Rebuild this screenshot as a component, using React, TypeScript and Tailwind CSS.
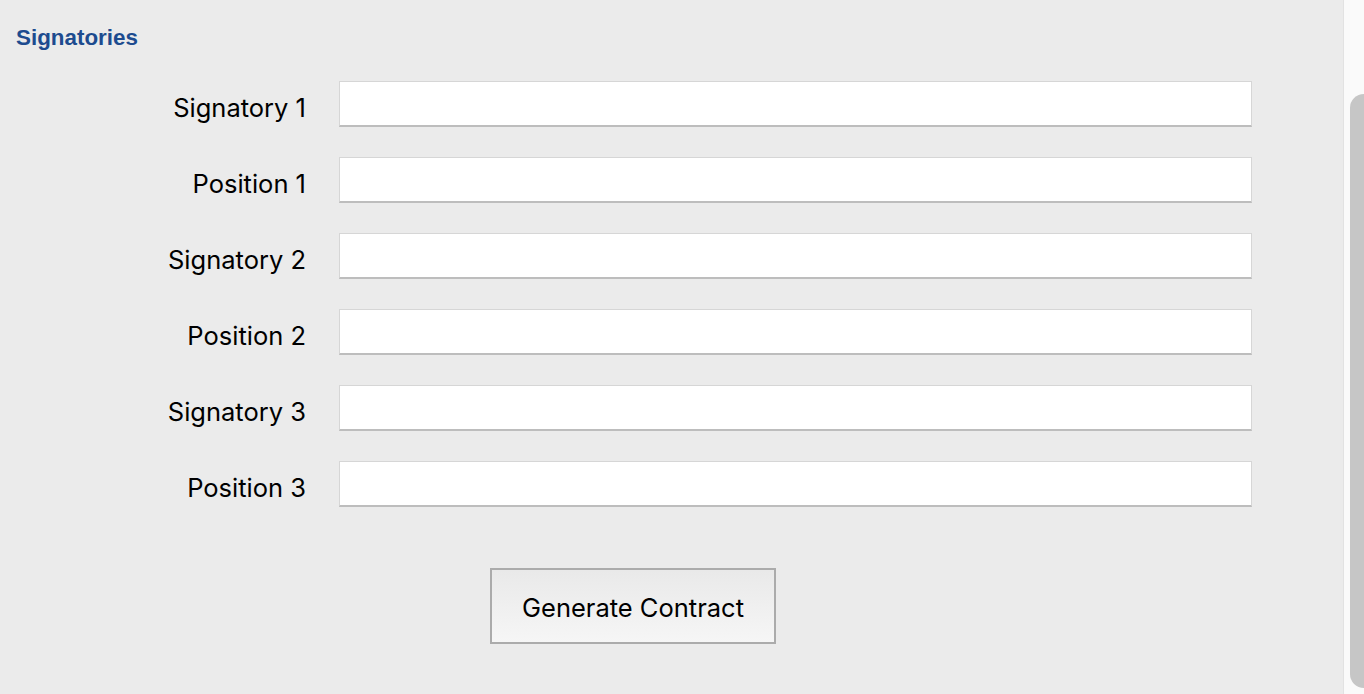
import React from "react";

const fields = [
  "Signatory 1",
  "Position 1",
  "Signatory 2",
  "Position 2",
  "Signatory 3",
  "Position 3",
];

const FieldRow = ({ label }: { label: string }) => (
  <div className="flex items-center h-[46px]">
    <label className="w-[306px] pt-[7px] text-right text-[25.5px] text-black font-['Inter','Liberation_Sans',sans-serif] leading-none">
      {label}
    </label>
    <input
      type="text"
      className="ml-[33px] w-[913px] h-[46px] bg-white border border-[#d6d6d6] border-b-2 border-b-[#bdbdbd] outline-none"
    />
  </div>
);

export default function App() {
  return (
    <div className="flex w-[1364px] h-[694px] overflow-hidden bg-[#ebebeb]">
      <div className="flex-1 flex flex-col">
        <h2 className="pl-[16px] pt-[24px] text-[22.4px] font-bold text-[#1d4b8f] leading-[28px] font-['Liberation_Sans',Arial,sans-serif]">
          Signatories
        </h2>
        <div className="mt-[29px] flex flex-col gap-[30px]">
          {fields.map((f) => (
            <FieldRow key={f} label={f} />
          ))}
        </div>
        <div className="mt-[61px] pl-[490px]">
          <button className="w-[286px] h-[76px] pt-[5px] border-2 border-[#ababab] bg-gradient-to-b from-[#e9e9e9] to-[#f6f6f6] text-[25.5px] text-black font-['Inter','Liberation_Sans',sans-serif]">
            Generate Contract
          </button>
        </div>
      </div>
      <div className="w-[21px] h-full bg-[#fafafa] border-l border-[#e2e2e2] pt-[94px] pl-[6px] pb-[6px]">
        <div className="w-full h-full bg-[#c6c6c6] rounded-l-full rounded-r-none" />
      </div>
    </div>
  );
}
